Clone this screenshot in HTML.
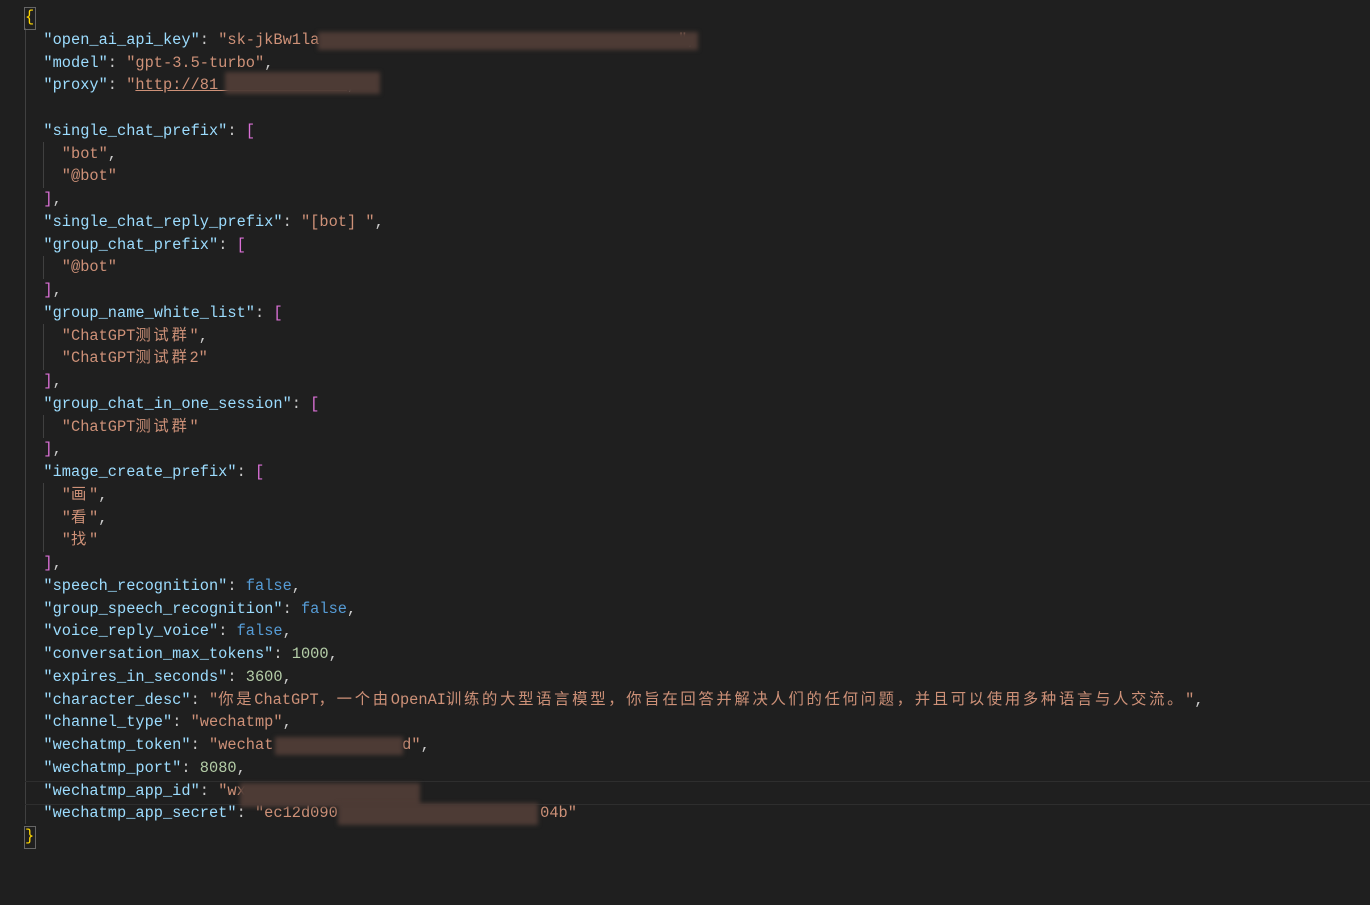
<!DOCTYPE html>
<html><head><meta charset="utf-8"><style>
html,body{margin:0;padding:0;background:#1f1f1f;width:1370px;height:905px;overflow:hidden}
.l{position:absolute;left:25px;height:22.75px;line-height:22.75px;white-space:pre;font-family:"Liberation Mono","Noto Sans CJK SC",monospace;font-size:15.33px;color:#cccccc}
.k{color:#9cdcfe}.s{color:#ce9178}.n{color:#b5cea8}.b{color:#569cd6}.y{color:#ffd700}.m{color:#da70d6}
.c{letter-spacing:2.7px}
.g{position:absolute;width:1px;background:#404040}
.bl{position:absolute;height:18px;background:#4d3b35;filter:blur(2px)}
</style></head><body>
<div class="g" style="left:25px;top:28px;height:796px"></div>
<div class="g" style="left:43px;top:142px;height:46px"></div>
<div class="g" style="left:43px;top:256px;height:23px"></div>
<div class="g" style="left:43px;top:324px;height:46px"></div>
<div class="g" style="left:43px;top:415px;height:23px"></div>
<div class="g" style="left:43px;top:483px;height:69px"></div>
<div style="position:absolute;left:25px;top:781px;width:1345px;height:22px;border-top:1px solid #2e2e2e;border-bottom:1px solid #2e2e2e"></div>
<div style="position:absolute;left:24px;top:7px;width:10px;height:21px;border:1px solid #666"></div>
<div style="position:absolute;left:24px;top:826px;width:10px;height:21px;border:1px solid #666"></div>

<div class="l" style="top:6px"><span class="y">{</span></div>
<div class="l" style="top:28.75px">  <span class="k">"open_ai_api_key"</span>: <span class="s">"sk-jkBw1la                                       "</span>,</div>
<div class="l" style="top:51.5px">  <span class="k">"model"</span>: <span class="s">"gpt-3.5-turbo"</span>,</div>
<div class="l" style="top:74.25px">  <span class="k">"proxy"</span>: <span class="s">"<u>http://81              </u></span>,</div>
<div class="l" style="top:119.75px">  <span class="k">"single_chat_prefix"</span>: <span class="m">[</span></div>
<div class="l" style="top:142.5px">    <span class="s">"bot"</span>,</div>
<div class="l" style="top:165.25px">    <span class="s">"@bot"</span></div>
<div class="l" style="top:188px">  <span class="m">]</span>,</div>
<div class="l" style="top:210.75px">  <span class="k">"single_chat_reply_prefix"</span>: <span class="s">"[bot] "</span>,</div>
<div class="l" style="top:233.5px">  <span class="k">"group_chat_prefix"</span>: <span class="m">[</span></div>
<div class="l" style="top:256.25px">    <span class="s">"@bot"</span></div>
<div class="l" style="top:279px">  <span class="m">]</span>,</div>
<div class="l" style="top:301.75px">  <span class="k">"group_name_white_list"</span>: <span class="m">[</span></div>
<div class="l" style="top:324.5px">    <span class="s">"ChatGPT<span class="c">测试群</span>"</span>,</div>
<div class="l" style="top:347.25px">    <span class="s">"ChatGPT<span class="c">测试群</span>2"</span></div>
<div class="l" style="top:370px">  <span class="m">]</span>,</div>
<div class="l" style="top:392.75px">  <span class="k">"group_chat_in_one_session"</span>: <span class="m">[</span></div>
<div class="l" style="top:415.5px">    <span class="s">"ChatGPT<span class="c">测试群</span>"</span></div>
<div class="l" style="top:438.25px">  <span class="m">]</span>,</div>
<div class="l" style="top:461px">  <span class="k">"image_create_prefix"</span>: <span class="m">[</span></div>
<div class="l" style="top:483.75px">    <span class="s">"<span class="c">画</span>"</span>,</div>
<div class="l" style="top:506.5px">    <span class="s">"<span class="c">看</span>"</span>,</div>
<div class="l" style="top:529.25px">    <span class="s">"<span class="c">找</span>"</span></div>
<div class="l" style="top:552px">  <span class="m">]</span>,</div>
<div class="l" style="top:574.75px">  <span class="k">"speech_recognition"</span>: <span class="b">false</span>,</div>
<div class="l" style="top:597.5px">  <span class="k">"group_speech_recognition"</span>: <span class="b">false</span>,</div>
<div class="l" style="top:620.25px">  <span class="k">"voice_reply_voice"</span>: <span class="b">false</span>,</div>
<div class="l" style="top:643px">  <span class="k">"conversation_max_tokens"</span>: <span class="n">1000</span>,</div>
<div class="l" style="top:665.75px">  <span class="k">"expires_in_seconds"</span>: <span class="n">3600</span>,</div>
<div class="l" style="top:688.5px">  <span class="k">"character_desc"</span>: <span class="s">"<span class="c">你是</span>ChatGPT<span class="c">，一个由</span>OpenAI<span class="c">训练的大型语言模型，你旨在回答并解决人们的任何问题，并且可以使用多种语言与人交流。</span>"</span>,</div>
<div class="l" style="top:711.25px">  <span class="k">"channel_type"</span>: <span class="s">"wechatmp"</span>,</div>
<div class="l" style="top:734px">  <span class="k">"wechatmp_token"</span>: <span class="s">"wechat              d"</span>,</div>
<div class="l" style="top:756.75px">  <span class="k">"wechatmp_port"</span>: <span class="n">8080</span>,</div>
<div class="l" style="top:779.5px">  <span class="k">"wechatmp_app_id"</span>: <span class="s">"wx</span></div>
<div class="l" style="top:802.25px">  <span class="k">"wechatmp_app_secret"</span>: <span class="s">"ec12d090                      04b"</span></div>
<div class="l" style="top:825px"><span class="y">}</span></div>

<div class="bl" style="left:318px;top:32px;width:380px"></div>
<div class="bl" style="left:225px;top:72px;width:155px;height:22px"></div>
<div class="bl" style="left:275px;top:737px;width:128px"></div>
<div class="bl" style="left:240px;top:783px;width:180px;height:24px"></div>
<div class="bl" style="left:338px;top:803px;width:200px;height:22px"></div>
</body></html>
